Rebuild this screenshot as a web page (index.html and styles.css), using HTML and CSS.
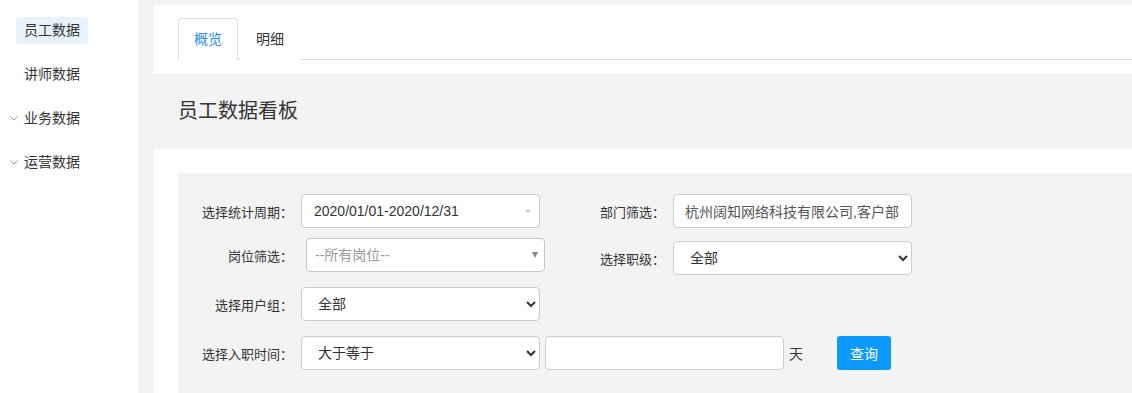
FILE: index.html
```html
<!DOCTYPE html>
<html>
<head>
  <meta charset="utf-8">
  <title>员工数据看板</title>
  <link rel="stylesheet" href="styles.css">
</head>
<body>
  <aside class="sidebar">
    <ul class="nav">
      <li class="nav-item"><span class="nav-icon"></span><span class="nav-label active">员工数据</span></li>
      <li class="nav-item"><span class="nav-icon"></span><span class="nav-label">讲师数据</span></li>
      <li class="nav-item">
        <span class="nav-icon"><svg width="8" height="5" viewBox="0 0 8 5"><path d="M0.5 0.5 L4 4 L7.5 0.5" fill="none" stroke="#999" stroke-width="1"/></svg></span>
        <span class="nav-label">业务数据</span>
      </li>
      <li class="nav-item">
        <span class="nav-icon"><svg width="8" height="5" viewBox="0 0 8 5"><path d="M0.5 0.5 L4 4 L7.5 0.5" fill="none" stroke="#999" stroke-width="1"/></svg></span>
        <span class="nav-label">运营数据</span>
      </li>
    </ul>
  </aside>

  <main class="main">
    <section class="tab-panel">
      <ul class="tabs">
        <li class="tab active">概览</li>
        <li class="tab">明细</li>
      </ul>
    </section>

    <div class="page-head">
      <h2>员工数据看板</h2>
    </div>

    <section class="board">
      <form class="filter">
        <div class="row row-1">
          <div class="field">
            <label>选择统计周期：</label>
            <div class="control pick">
              2020/01/01-2020/12/31
              <span class="caret-light"></span>
            </div>
          </div>
          <div class="field">
            <label>部门筛选：</label>
            <input class="control text" type="text" value="杭州阔知网络科技有限公司,客户部">
          </div>
        </div>

        <div class="row row-2">
          <div class="field">
            <label>岗位筛选：</label>
            <div class="control chosen">
              --所有岗位--
              <span class="caret-dark"></span>
            </div>
          </div>
          <div class="field shift">
            <label>选择职级：</label>
            <select class="control">
              <option>全部</option>
            </select>
          </div>
        </div>

        <div class="row row-3">
          <div class="field">
            <label>选择用户组：</label>
            <select class="control">
              <option>全部</option>
            </select>
          </div>
        </div>

        <div class="row-4">
          <div class="field">
            <label>选择入职时间：</label>
            <select class="control">
              <option>大于等于</option>
            </select>
            <input class="control text days" type="text" value="">
            <span class="unit">天</span>
            <button type="button" class="btn-query">查询</button>
          </div>
        </div>
      </form>
    </section>
  </main>
</body>
</html>
```

FILE: styles.css
```css
body {
  margin: 0;
  display: flex;
  min-height: 100vh;
  background-color: #fff;
  font-family: "Liberation Sans", "Noto Sans CJK SC", sans-serif;
  font-size: 14px;
  color: #333;
  overflow: hidden;
}

ul {
  list-style: none;
  margin: 0;
  padding: 0;
}

/* sidebar */
.sidebar {
  width: 138px;
  flex-shrink: 0;
  background-color: #fff;
}

.nav {
  padding-top: 17px;
}

.nav-item {
  display: flex;
  align-items: center;
  padding-left: 8px;
  margin-bottom: 17px;
}

.nav-icon {
  width: 8px;
  display: flex;
  align-items: center;
  position: relative;
  left: 2px;
}

.nav-label {
  height: 27px;
  line-height: 27px;
  padding: 0 8px;
  border-radius: 4px;
}

.nav-label.active {
  background-color: #e6f3ff;
}

/* main */
.main {
  flex: 1;
  background-color: #f3f3f3;
  padding: 5px 0 0 16px;
}

.tab-panel {
  background-color: #fff;
  padding: 13px 0 13px 24px;
}

.tabs {
  display: flex;
  border-bottom: 1px solid #ddd;
}

.tab {
  line-height: 41px;
  padding: 0 15px;
  border: 1px solid transparent;
  border-bottom: 0;
  border-radius: 4px 4px 0 0;
  margin-bottom: -1px;
  background-color: #fff;
  margin-right: 2px;
}

.tab.active {
  border-color: #ddd;
  color: #1f8fff;
}

.page-head {
  height: 76px;
  padding-left: 24px;
}

.page-head h2 {
  margin: 0;
  line-height: 76px;
  font-size: 20px;
  font-weight: normal;
  color: #333;
}

.board {
  background-color: #fff;
  padding: 24px 0 0 24px;
}

/* filter form */
.filter {
  background-color: #f3f3f3;
  padding: 21px 0 40px 0;
}

.row {
  display: grid;
  grid-template-columns: 372px 1fr;
  align-items: start;
}

.row-1 {
  margin-bottom: 10px;
}

.row-2 {
  margin-bottom: 12px;
}

.row-3 {
  margin-bottom: 15px;
}

.field {
  display: flex;
  align-items: center;
}

.field.shift {
  margin-top: 3px;
}

.field label {
  flex-shrink: 0;
  width: 115px;
  margin-right: 8px;
  text-align: right;
  font-size: 13px;
  color: #333;
  white-space: nowrap;
}

.control {
  flex-shrink: 0;
  box-sizing: border-box;
  width: 239px;
  height: 34px;
  border: 1px solid #ccc;
  border-radius: 4px;
  background-color: #fff;
  font-family: inherit;
  font-size: 14px;
  color: #333;
}

select.control {
  padding: 0 12px;
}

.text {
  padding: 0 11px;
  color: #555;
}

.pick {
  position: relative;
  line-height: 32px;
  padding-left: 12px;
}

.caret-light {
  position: absolute;
  right: 8px;
  top: 15px;
  border-left: 3px solid transparent;
  border-right: 3px solid transparent;
  border-top: 3px solid #c8c8c8;
}

.chosen {
  position: relative;
  margin-left: 5px;
  line-height: 32px;
  padding-left: 8px;
  color: #999;
  border-color: #c6c6c6;
}

.caret-dark {
  position: absolute;
  right: 6px;
  top: 13px;
  border-left: 3px solid transparent;
  border-right: 3px solid transparent;
  border-top: 6px solid #888;
}

.days {
  margin-left: 5px;
}

.unit {
  margin-left: 5px;
  font-size: 14px;
}

.btn-query {
  flex-shrink: 0;
  margin-left: 34px;
  width: 54px;
  height: 34px;
  border: none;
  border-radius: 3px;
  background-color: #0b98ff;
  color: #fff;
  font-family: inherit;
  font-size: 14px;
  cursor: pointer;
}
```
